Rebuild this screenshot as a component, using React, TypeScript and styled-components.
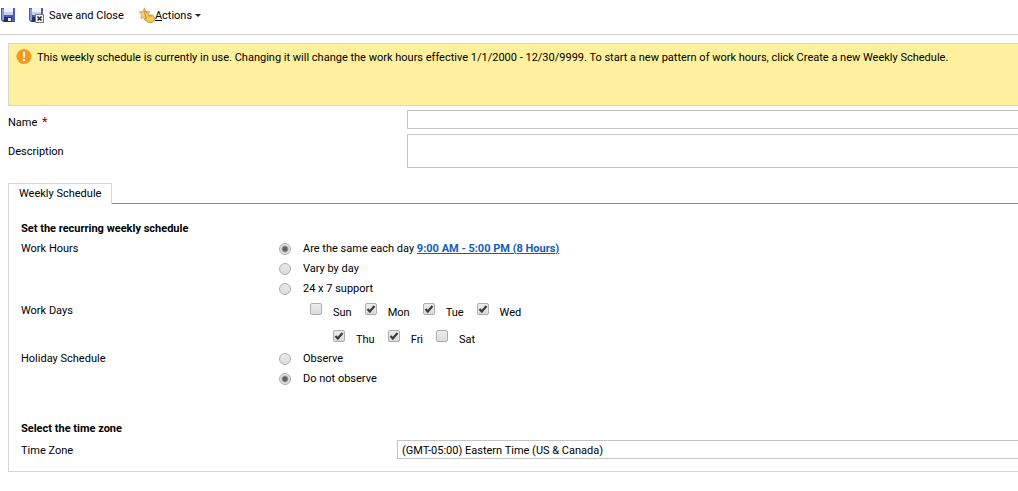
import React from "react";
import styled, { createGlobalStyle, css } from "styled-components";

const line = "#d6d6d6";
const fieldLine = "#c5c5c5";

const GlobalStyle = createGlobalStyle`
  * { box-sizing: border-box; }
  body { margin: 0; background: #fff; color: #000; font: 11px/20px Roboto, "Segoe UI", sans-serif; overflow-x: hidden; }
`;

const Toolbar = styled.header`
  display: flex;
  align-items: center;
  height: 35px;
  padding-bottom: 4px;
  border-bottom: 1px solid ${line};
`;

const ToolButton = styled.button<{ $after?: number }>`
  display: flex;
  align-items: center;
  height: 20px;
  margin: 0 ${(p) => p.$after ?? 0}px 0 0;
  padding: 0;
  border: 0;
  background: none;
  color: inherit;
  font: inherit;
  white-space: nowrap;
`;

const ToolLabel = styled.span<{ $gap?: number }>`
  margin-left: ${(p) => p.$gap ?? 0}px;
  padding-top: 2px;
  line-height: 18px;
`;

const Caret = styled.span`
  margin-left: 3px;
  border: 3px solid transparent;
  border-top-color: #222;
  border-bottom: 0;
`;

const Page = styled.main`
  padding: 8px 0 0 8px;
`;

const Banner = styled.section`
  display: flex;
  gap: 5px;
  min-height: 63px;
  padding: 4px 7px;
  border: 1px solid ${line};
  border-right: 0;
  background: #fff09d;

  svg { flex: none; }
  p { margin: 0; }
`;

const Form = styled.form`
  margin: 0;
`;

const Field = styled.div<{ $split: number }>`
  display: grid;
  grid-template-columns: ${(p) => p.$split}px 1fr;
  align-items: center;
`;

const Caption = styled.label<{ $low?: boolean }>`
  padding-top: ${(p) => (p.$low ? 7 : 2)}px;
  line-height: 12px;
`;

const Fields = styled.div`
  display: grid;
  gap: 5px;
  padding: 4px 0 15px;
`;

const Required = styled.span`
  margin-left: 2px;
  color: #b00000;
  font-size: 13px;
  line-height: 0;
`;

const box = css`
  display: block;
  width: 100%;
  margin: 0;
  border: 1px solid ${fieldLine};
  border-right: 0;
  border-radius: 0;
  background: #fff;
  color: inherit;
  font: inherit;
  outline: 0;
`;

const TextBox = styled.input`
  ${box}
  height: 19px;
`;

const TextArea = styled.textarea`
  ${box}
  height: 34px;
  resize: none;
`;

const Select = styled.select`
  ${box}
  height: 19px;
  padding: 2px 4px 0;
  line-height: 15px;
  appearance: none;
`;

const Tabs = styled.div`
  display: flex;

  &::after {
    content: "";
    flex: 1;
    border-bottom: 1px solid #8b8796;
  }
`;

const Tab = styled.button`
  height: 21px;
  padding: 0 10px;
  border: 1px solid ${line};
  border-bottom: 0;
  background: #fff;
  color: inherit;
  font: inherit;
  line-height: 18px;
`;

const Panel = styled.div`
  padding: 15px 0 12px 12px;
  border: 1px solid ${line};
  border-width: 0 0 1px 1px;
`;

const Heading = styled.h2`
  margin: 0;
  font: inherit;
  font-weight: 700;
`;

const Group = styled.fieldset`
  display: grid;
  grid-template-columns: 258px 1fr;
  margin: 0;
  padding: 0;
  border: 0;
`;

const GroupLabel = styled.span<{ $low?: boolean }>`
  padding-top: ${(p) => (p.$low ? 2 : 0)}px;
`;

const Choice = styled.div`
  display: flex;
  align-items: center;
  height: 20px;
  white-space: pre;
`;

const Radio = styled.input.attrs({ type: "radio" })`
  appearance: none;
  width: 12px;
  height: 12px;
  margin: 0 12px 0 0;
  border: 1px solid #adadad;
  border-radius: 50%;
  background: linear-gradient(#e9e9e9, #dcdcdc);

  &:checked {
    background: radial-gradient(circle, #606060 0 2px, #e3e3e3 4px);
  }
`;

const HoursLink = styled.a`
  color: #1160b7;
  font-weight: 700;
`;

const Days = styled.div`
  display: grid;
  gap: 7px;
  width: 274px;
  padding: 4px 0 0;
  margin-bottom: -1px;
`;

const DayRow = styled.div<{ $short?: boolean }>`
  display: flex;
  gap: 13px;
  padding-left: ${(p) => (p.$short ? 54 : 31)}px;
`;

const Day = styled.label`
  display: flex;
  gap: 11px;
  height: 20px;
`;

const Check = styled.span`
  position: relative;
  width: 12px;
  height: 12px;

  input {
    appearance: none;
    display: block;
    width: 12px;
    height: 12px;
    margin: 0;
    border: 1px solid #adadad;
    border-radius: 2px;
    background: linear-gradient(#ececec, #dcdcdc);
  }
  svg { position: absolute; inset: 0; pointer-events: none; }
`;

const Zone = styled.section`
  display: grid;
  gap: 1px;
  padding-top: 30px;
`;

function Disk({ closing }: { closing?: boolean }) {
  return (
    <svg width={closing ? 17 : 16} height="16" viewBox={closing ? "0 0 17 16" : "0 0 16 16"} aria-hidden="true">
      <path d="M1 1h14v14H3l-2-2z" fill="#4a5cc0" />
      <path d="M2 2h2v11H2z" fill="#8b9ae6" />
      <path d="M4 1h9v7H4z" fill="#eef3ff" />
      <path d="M4 5h9v3H4z" fill="#c4d0ee" />
      <path d="M4 10h8v5H4z" fill="#2b3058" />
      <path d="M8 11h3v3H8z" fill="#e8e8ea" />
      {closing && (
        <>
          <path d="M7.500 7.500h8v8h-8z" fill="#f2f2f2" stroke="#777" />
          <path d="M9.500 9.500l4 4m0-4l-4 4" stroke="#222" strokeWidth="1.500" />
        </>
      )}
    </svg>
  );
}

function StarHand() {
  return (
    <svg width="16" height="16" viewBox="0 0 16 16" aria-hidden="true">
      <path d="M5.500 .8l1.500 3.700 4 .4-3 2.700.9 4-3.400-2-3.600 2 .9-4-2.500-2.700 3.700-.4z" fill="#ffcf78" stroke="#e0913a" strokeWidth=".8" />
      <path d="M5 4.500c.8-.7 1.500-.3 2 .3l2.800 3.100 3.700.3 1.700 1.600v3.400l-1.800 2.200H9.200L5 12.200c-.3-1 .6-1.500 1.400-1.200l1.200.6z" fill="#f7cb52" stroke="#a87424" strokeWidth=".7" />
      <path d="M9.800 8.200l.8 1.800m1-1.800l.7 1.800" stroke="#a87424" strokeWidth=".6" />
    </svg>
  );
}

function DayBox({ name, on }: { name: string; on?: boolean }) {
  return (
    <Day>
      <Check>
        <input type="checkbox" defaultChecked={on} />
        {on && (
          <svg width="12" height="12" viewBox="0 0 12 12" aria-hidden="true">
            <path d="M2.500 6l2.300 2.500L9.500 3" fill="none" stroke="#3d3d3d" strokeWidth="2.200" />
          </svg>
        )}
      </Check>
      <span>{name}</span>
    </Day>
  );
}

export default function App() {
  return (
    <>
      <GlobalStyle />
      <Toolbar>
        <ToolButton aria-label="Save" $after={12}>
          <Disk />
        </ToolButton>
        <ToolButton $after={15}>
          <Disk closing />
          <ToolLabel $gap={4}>Save and Close</ToolLabel>
        </ToolButton>
        <ToolButton>
          <StarHand />
          <ToolLabel><u>A</u>ctions</ToolLabel>
          <Caret />
        </ToolButton>
      </Toolbar>
      <Page>
        <Banner>
          <svg width="16" height="17" viewBox="0 0 17 17" aria-hidden="true">
            <circle cx="8.500" cy="8.500" r="8" fill="#f29a1f" />
            <path d="M7.300 3.500h2.400l-.4 6.300H7.700z" fill="#fff" />
            <circle cx="8.500" cy="12.300" r="1.300" fill="#fff" />
          </svg>
          <p>This weekly schedule is currently in use. Changing it will change the work hours effective 1/1/2000 - 12/30/9999. To start a new pattern of work hours, click Create a new Weekly Schedule.</p>
        </Banner>
        <Form>
          <Fields>
            <Field $split={399}>
              <Caption htmlFor="name" $low>Name <Required>*</Required></Caption>
              <TextBox id="name" />
            </Field>
            <Field $split={399}>
              <Caption htmlFor="description">Description</Caption>
              <TextArea id="description" />
            </Field>
          </Fields>
          <Tabs role="tablist">
            <Tab type="button" role="tab" aria-selected="true">Weekly Schedule</Tab>
          </Tabs>
          <Panel>
            <Heading>Set the recurring weekly schedule</Heading>
            <Group aria-label="Work Hours">
              <GroupLabel>Work Hours</GroupLabel>
              <div>
                <Choice>
                  <Radio id="same" name="hours" defaultChecked />
                  <label htmlFor="same">Are the same each day </label>
                  <HoursLink href="#hours">9:00 AM - 5:00 PM (8 Hours)</HoursLink>
                </Choice>
                <Choice>
                  <Radio id="vary" name="hours" />
                  <label htmlFor="vary">Vary by day</label>
                </Choice>
                <Choice>
                  <Radio id="support" name="hours" />
                  <label htmlFor="support">24 x 7 support</label>
                </Choice>
              </div>
            </Group>
            <Group aria-label="Work Days">
              <GroupLabel $low>Work Days</GroupLabel>
              <Days>
                <DayRow>
                  <DayBox name="Sun" />
                  <DayBox name="Mon" on />
                  <DayBox name="Tue" on />
                  <DayBox name="Wed" on />
                </DayRow>
                <DayRow $short>
                  <DayBox name="Thu" on />
                  <DayBox name="Fri" on />
                  <DayBox name="Sat" />
                </DayRow>
              </Days>
            </Group>
            <Group aria-label="Holiday Schedule">
              <GroupLabel>Holiday Schedule</GroupLabel>
              <div>
                <Choice>
                  <Radio id="observe" name="holiday" />
                  <label htmlFor="observe">Observe</label>
                </Choice>
                <Choice>
                  <Radio id="ignore" name="holiday" defaultChecked />
                  <label htmlFor="ignore">Do not observe</label>
                </Choice>
              </div>
            </Group>
            <Zone>
              <Heading>Select the time zone</Heading>
              <Field $split={376}>
                <Caption htmlFor="zone">Time Zone</Caption>
                <Select id="zone">
                  <option>(GMT-05:00) Eastern Time (US &amp; Canada)</option>
                </Select>
              </Field>
            </Zone>
          </Panel>
        </Form>
      </Page>
    </>
  );
}
